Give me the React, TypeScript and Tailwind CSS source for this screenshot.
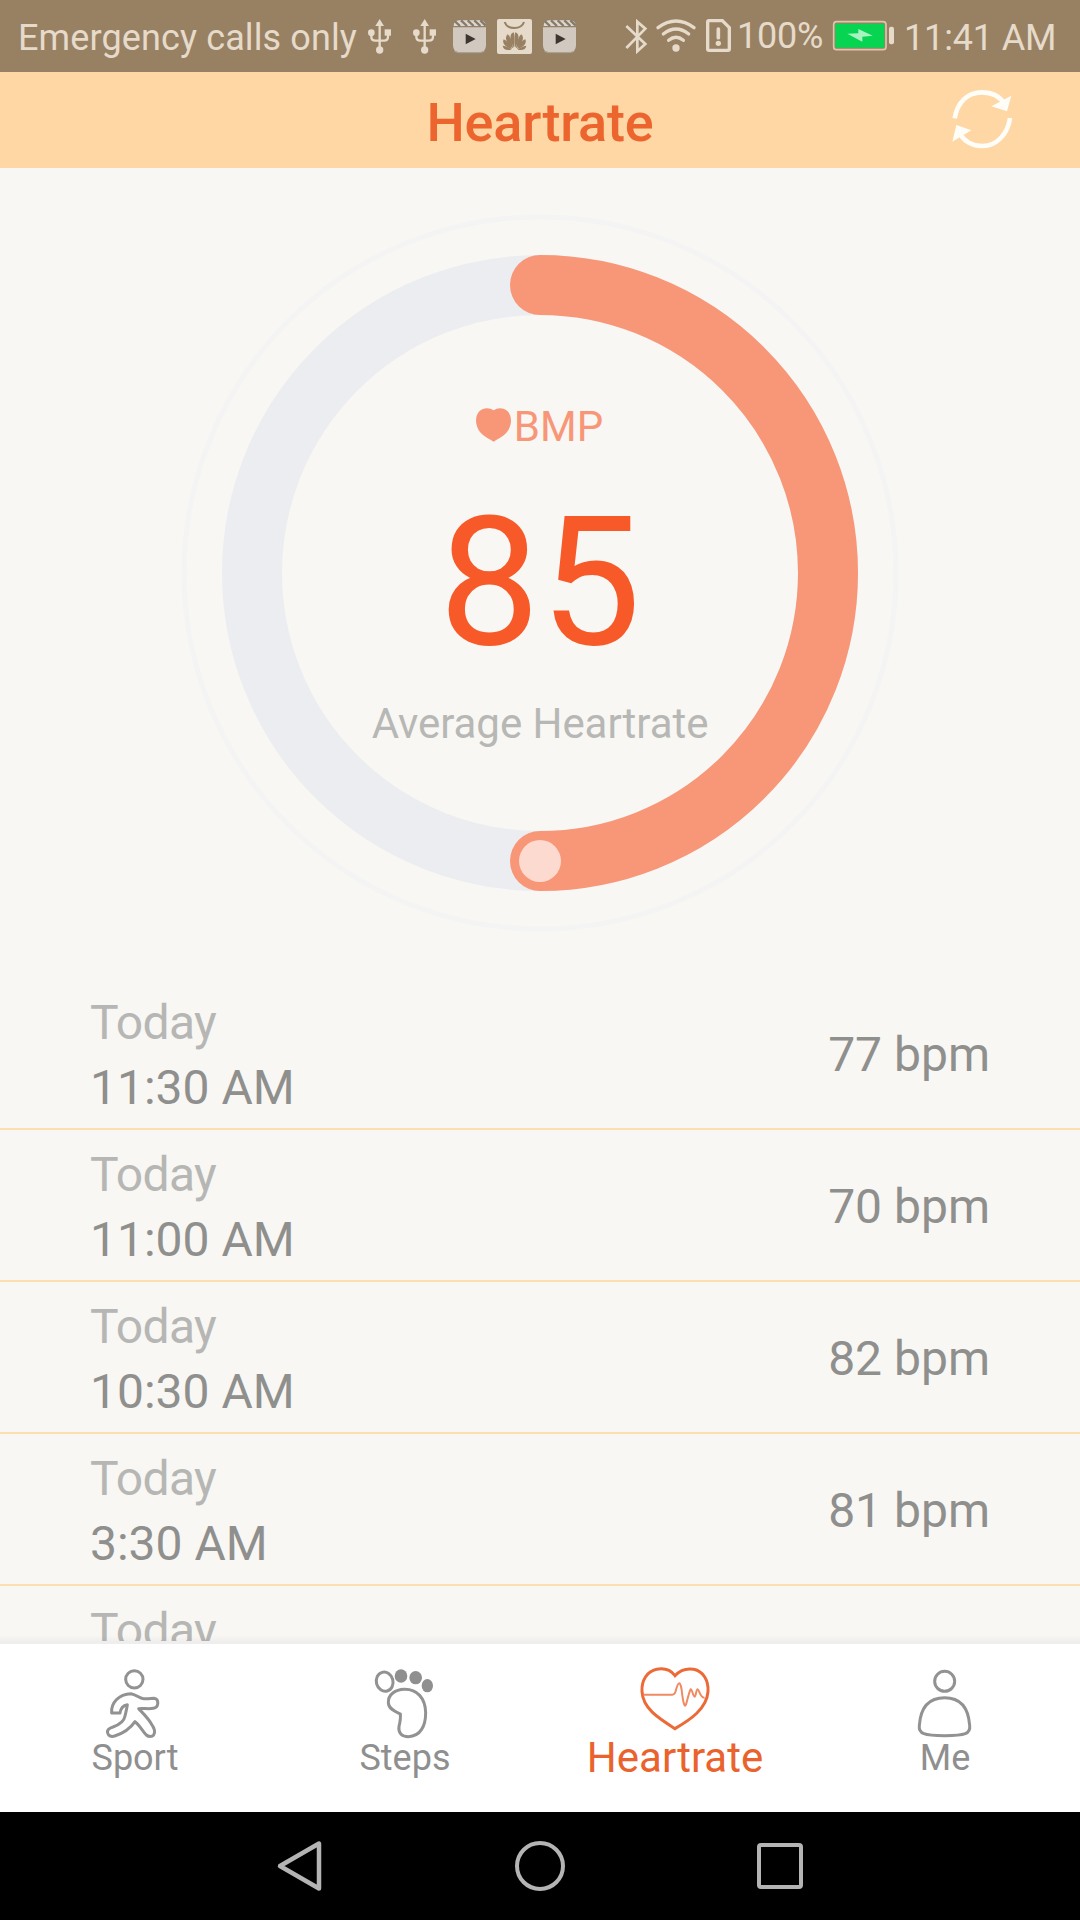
import React from "react";

const INK = "#e6dacb";

function Usb() {
  return (
    <svg className="h-[72px] w-[27px]" viewBox="48 0 81 216" fill="none" stroke={INK} strokeWidth="7">
      <path d="M89 75V145M64 98V110Q64 121 76 122H102Q114 121 114 110V100" />
      <path d="M89 57L102 78H76Z" fill={INK} stroke="none" />
      <circle cx="64" cy="98" r="10" fill={INK} stroke="none" />
      <rect x="104" y="88" width="19" height="19" fill={INK} stroke="none" />
      <circle cx="89" cy="150" r="11" fill={INK} stroke="none" />
    </svg>
  );
}

function Clapper() {
  return (
    <svg className="h-[72px] w-[39px]" viewBox="300 0 117 216">
      <path d="M309 82H408V136Q408 157 387 157H330Q309 157 309 136Z" fill="#d1c9c0" />
      <path d="M313 154Q320 158 330 158H387Q397 158 404 153" fill="none" stroke="#aaa399" strokeWidth="3" />
      <path d="M311 78Q311 62 328 61H390Q406 62 408 78Z" fill="#ded6cb" />
      <path d="M315 64L330 78M333 61L351 78M353 61L371 78M373 61L391 78M391 61L407 77" stroke="#857a6e" strokeWidth="7" />
      <path d="M347 101L377 117L347 133Z" fill="#3d3630" />
    </svg>
  );
}

function Gallery() {
  return (
    <svg className="h-[72px] w-[39px]" viewBox="435 0 117 216">
      <rect x="441" y="57" width="105" height="105" rx="6" fill={INK} />
      <path d="M464 66Q470 84 493 84T522 66" fill="none" stroke="#988162" strokeWidth="6" />
      <g fill="#988162">
        <path d="M492 143C478 122 478 100 491 97C494 104 494 128 492 143Z" />
        <path d="M495 143C509 122 509 100 496 97C493 104 493 128 495 143Z" />
        <path d="M489 145C468 130 463 112 473 103C482 110 487 128 489 145Z" />
        <path d="M498 145C519 130 524 112 514 103C505 110 500 128 498 145Z" />
        <path d="M486 147C464 142 456 128 461 118C472 122 481 134 486 147Z" />
        <path d="M501 147C523 142 531 128 526 118C515 122 506 134 501 147Z" />
        <path d="M484 149C469 153 459 147 458 137C468 138 478 143 484 149Z" />
        <path d="M503 149C518 153 528 147 529 137C519 138 509 143 503 149Z" />
      </g>
    </svg>
  );
}

function StatusBar() {
  return (
    <div className="flex h-[72px] items-center bg-[#988162] pl-[18px] text-[36px] leading-[72px] whitespace-nowrap text-[#e6dacb]">
      <span className="w-[348px] pt-[3px] tracking-[0.12px]">Emergency calls only</span>
      <Usb />
      <div className="ml-[18px] flex"><Usb /></div>
      <div className="ml-3 flex gap-1.5">
        <Clapper />
        <Gallery />
        <Clapper />
      </div>
      <div className="ml-[45px] flex gap-1.5">
        <svg className="h-[72px] w-[25px]" viewBox="822 0 75 216" fill="none" stroke={INK} strokeWidth="8">
          <path d="M829 78L886 132L862 154V65L886 86L829 144" />
        </svg>
        <svg className="h-[72px] w-[43px]" viewBox="915 0 129 216" fill="none" stroke={INK} strokeWidth="10" strokeLinecap="round">
          <path d="M924 83Q978 43 1032 83M940 102Q978 72 1016 102M956 121Q978 103 1000 121" />
          <circle cx="978" cy="144" r="11" fill={INK} stroke="none" />
        </svg>
        <svg className="h-[72px] w-[29px]" viewBox="12 0 87 216" fill="none" stroke={INK} strokeWidth="10">
          <path d="M27 62H67L88 83V147Q88 151 84 151H27Q23 151 23 147V66Q23 62 27 62Z" />
          <path d="M55 87V113" strokeWidth="11" strokeLinecap="round" />
          <circle cx="55" cy="130" r="8" fill={INK} stroke="none" />
        </svg>
      </div>
      <span className="ml-[4px] w-[94px] tracking-[-0.2px]">100%</span>
      <svg className="h-[72px] w-[65px]" viewBox="393 0 195 216">
        <rect x="401" y="65" width="157" height="84" rx="9" fill="none" stroke="#e3c4ae" strokeWidth="5" />
        <rect x="406" y="71" width="147" height="72" rx="2" fill="#07d551" />
        <path d="M442 101L475 100V87L518 107L487 110V125Z" fill="#a8f3c1" />
        <rect x="567" y="80" width="15" height="53" rx="6" fill={INK} />
      </svg>
      <span className="ml-[8px] pt-[3px] tracking-[-0.15px]">11:41 AM</span>
    </div>
  );
}

function Header() {
  return (
    <header className="grid h-24 grid-cols-[1fr_auto_1fr] items-center bg-[#fed7a5]">
      <span />
      <h1 className="pt-[5px] text-[54px] leading-[90px] font-medium tracking-[-0.2px] text-[#ec652e]">Heartrate</h1>
      <svg className="mr-[66px] h-24 w-[66px] justify-self-end" viewBox="744 216 198 288" fill="none" stroke="#fffdf8" strokeWidth="14">
        <path d="M764 355C772 307 802 277 846 277C875 277 899 289 913 311M930 354C924 400 892 438 847 438C818 438 795 427 779 400" />
        <path d="M934 287L921 334L874 319ZM769 375L814 391L757 425Z" fill="#fffdf8" stroke="none" />
      </svg>
    </header>
  );
}

function Gauge() {
  return (
    <section className="mt-[45px] grid h-[720px] w-[720px] place-self-center">
      <svg className="col-start-1 row-start-1 h-[720px] w-[720px]" viewBox="0 0 720 720" fill="none">
        <circle cx="360" cy="360" r="356" stroke="#f4f4f4" strokeWidth="5" />
        <circle cx="360" cy="360" r="288" stroke="#ebedf0" strokeWidth="60" />
        <path d="M360 72A288 288 0 0 1 360 648" stroke="#f89678" strokeWidth="60" strokeLinecap="round" />
        <circle cx="360" cy="648" r="21" fill="#fddacf" />
      </svg>
      <div className="col-start-1 row-start-1 flex flex-col items-center pt-[189px]">
        <div className="flex h-[50px] items-center text-[42px] leading-[50px] text-[#f89678]">
          <svg className="mr-[2px] -ml-[2px] mb-[5px] h-[34px] w-[37px]" viewBox="105 81 111 102" fill="#f89678">
            <path d="M161 88C173 79 191 79 203 91C218 107 215 136 201 153C189 168 172 174 161 182C149 174 133 168 120 153C106 136 103 107 118 91C130 79 148 79 161 88Z" />
          </svg>
          <span>BMP</span>
        </div>
        <strong className="mt-[41px] text-[180px] leading-[180px] font-normal text-[#f75a28]">85</strong>
        <span className="mt-[26px] text-[42px] leading-[50px] tracking-[-0.05px] text-[#b7b7b5]">Average Heartrate</span>
      </div>
    </section>
  );
}

const readings = [
  { time: "11:30 AM", bpm: 77 },
  { time: "11:00 AM", bpm: 70 },
  { time: "10:30 AM", bpm: 82 },
  { time: "3:30 AM", bpm: 81 },
];

function ReadingList() {
  return (
    <div className="relative mt-[45px] h-[666px] overflow-hidden">
      <ul>
        {readings.map((r) => (
          <li key={r.time} className="flex h-[152px] items-start justify-between border-b-2 border-[#fcdfb0] px-[90px] pt-[13px] text-[48px] text-[#8f8f8d]">
            <div className="flex flex-col leading-[65px]">
              <span className="leading-[64px] tracking-[-0.6px] text-[#b6b6b4]">Today</span>
              <span>{r.time}</span>
            </div>
            <span className="mt-[32px] leading-[64px]">{r.bpm} bpm</span>
          </li>
        ))}
        <li className="px-[90px] pt-[13px] text-[48px] leading-[64px] tracking-[-0.6px] text-[#b6b6b4]">Today</li>
      </ul>
      <div className="absolute inset-x-0 bottom-0 flex flex-col">
        <div className="h-1.5 bg-linear-to-b from-transparent to-[#00000008]" />
        <div className="h-[3px] bg-[#efeded]" />
      </div>
    </div>
  );
}

function TabBar() {
  return (
    <nav className="grid h-[168px] grid-cols-4 bg-white pt-6 text-[36px] leading-[48px] text-[#8f8f8f]">
      <div className="flex flex-col items-center">
        <svg className="h-[66px] w-[60px] overflow-visible" viewBox="135 84 180 198" fill="none" stroke="#929292" strokeWidth="9" strokeLinejoin="round">
          <circle cx="223" cy="118" r="26" />
          <path d="M213 161C228 163 238 176 251 176C263 178 273 175 282 175C298 177 297 202 280 205C265 208 251 204 236 206C248 219 263 233 273 250C281 261 288 275 281 285C276 291 266 291 259 285C247 273 239 255 225 245C212 264 190 280 164 288C154 291 145 288 143 279C140 269 149 264 159 261C178 254 192 246 195 228C198 215 201 204 202 194C190 196 182 205 180 219L155 219C152 190 176 162 213 161Z" />
        </svg>
        <span>Sport</span>
      </div>
      <div className="flex flex-col items-center">
        <svg className="h-[66px] w-[66px] overflow-visible" viewBox="936 84 198 198" fill="none" stroke="#929292" strokeWidth="9">
          <ellipse cx="974" cy="125" rx="25" ry="29" transform="rotate(-15 974 125)" />
          <g fill="#8f8f8f" stroke="none">
            <ellipse cx="1023" cy="108" rx="19" ry="20" />
            <ellipse cx="1067" cy="113" rx="19" ry="20" />
            <ellipse cx="1102" cy="137" rx="17" ry="20" />
          </g>
          <path d="M1033 148C1071 147 1096 174 1097 218C1097 257 1082 289 1045 290C1025 290 1014 279 1017 259C1020 247 1022 231 1021 222C1009 216 986 209 985 188C984 163 1006 149 1033 148Z" />
        </svg>
        <span>Steps</span>
      </div>
      <div className="flex flex-col items-center text-[42px] text-[#ea632d]">
        <svg className="h-[66px] w-[78px] overflow-visible" viewBox="228 84 234 198" fill="none" stroke="#ec6a38" strokeWidth="9">
          <path d="M345 107C332 90 311 84 290 88C261 94 244 121 246 155C249 207 298 236 345 266C391 239 440 207 444 155C446 121 430 94 401 88C379 84 359 92 345 107Z" />
          <path d="M250 164H337Q344 164 347 154C354 125 361 121 365 150C370 195 375 208 380 187C384 171 388 155 392 148C397 148 399 170 404 170C408 170 408 148 413 148C418 150 421 176 434 173" strokeWidth="6" stroke="#f08a62" />
        </svg>
        <span>Heartrate</span>
      </div>
      <div className="flex flex-col items-center">
        <svg className="h-[66px] w-[60px] overflow-visible" viewBox="1065 84 180 198" fill="none" stroke="#929292" strokeWidth="9">
          <circle cx="1154" cy="124" r="30" />
          <path d="M1154 173C1109 173 1082 201 1078 256C1075 281 1092 287 1154 287C1216 287 1232 281 1229 256C1225 201 1199 173 1154 173Z" />
        </svg>
        <span>Me</span>
      </div>
    </nav>
  );
}

function SystemBar() {
  return (
    <div className="flex h-[108px] items-center justify-between bg-black px-[275px]">
      <svg className="h-[54px] w-[50px]" viewBox="0 0 50 54" fill="none" stroke="#b4b4b4" strokeWidth="4.5" strokeLinejoin="round">
        <path d="M44 4.5V49.500L5 27Z" />
      </svg>
      <div className="mr-[2px] h-[50px] w-[50px] rounded-full border-[4px] border-[#b4b4b4]" />
      <div className="mr-[2px] h-[46px] w-[46px] rounded-[4px] border-[4px] border-[#b4b4b4]" />
    </div>
  );
}

export default function App() {
  return (
    <div className="flex h-[1920px] w-[1080px] flex-col overflow-hidden bg-[#f8f7f3] font-[Roboto,sans-serif]">
      <StatusBar />
      <Header />
      <div className="grid">
        <Gauge />
      </div>
      <ReadingList />
      <TabBar />
      <SystemBar />
    </div>
  );
}
